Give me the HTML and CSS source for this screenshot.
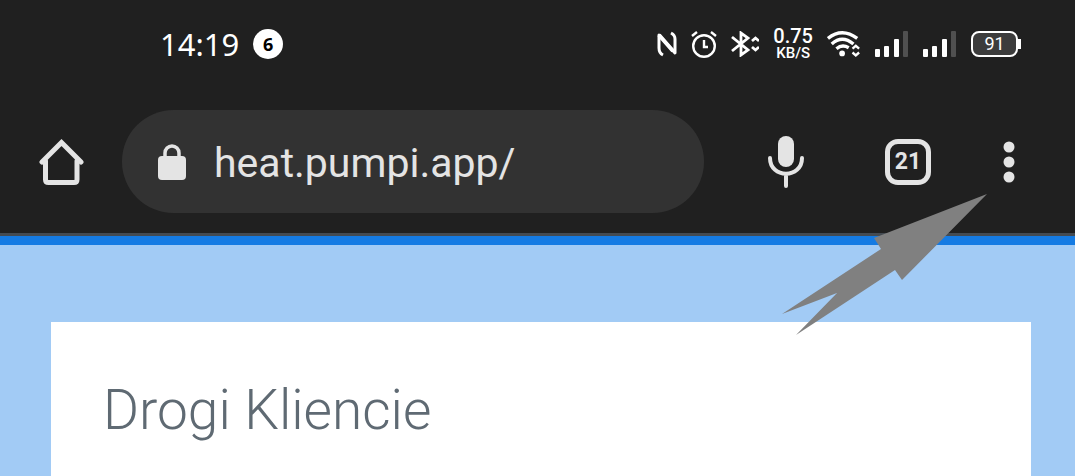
FILE: index.html
```html
<!DOCTYPE html>
<html lang="pl">
<head>
    <meta charset="UTF-8">
    <meta name="viewport" content="width=device-width, initial-scale=1.0">
    <title>heat.pumpi.app</title>
    <link rel="stylesheet" href="styles.css">
</head>
<body>
    <header class="browser">
        <div class="status-bar">
            <div class="status-left">
                <span class="clock">14:19</span>
                <span class="count">6</span>
            </div>
            <div class="status-right">
                <svg class="nfc" width="20" height="26" viewBox="0 0 20 26" fill="none" stroke="#fff" stroke-width="3" stroke-linejoin="round">
                    <path d="M6 24Q2 22 2 17V4L18 22V8Q18 4 14 2"/>
                    <path d="M2 4L16 20" stroke-width="4"/>
                </svg>
                <svg class="alarm" width="26" height="28" viewBox="0 0 26 28" fill="none" stroke="#fff" stroke-width="2.4">
                    <circle cx="13" cy="16" r="10.8"/>
                    <path d="M1 6L6 2M25 6L20 2M13 10V17H17"/>
                </svg>
                <svg class="bluetooth" width="28" height="26" viewBox="0 0 28 26" fill="none" stroke="#fff" stroke-width="2.8">
                    <path d="M1 6L17 19L10 24V2L17 7L1 20"/>
                    <path d="M21 10L24.500 7L28 10M21 16L24.500 19L28 16"/>
                </svg>
                <div class="speed">
                    <span class="speed-value">0.75</span>
                    <span class="speed-unit">KB/S</span>
                </div>
                <svg class="wifi" width="34" height="28" viewBox="0 0 36 28" fill="none" stroke="#fff" stroke-width="3.600">
                    <path d="M1 8Q16 -4 32 8M5 14Q16 4 28 14M10 19Q16 14 23 18"/>
                    <circle cx="16" cy="24" r="3" fill="#fff" stroke="none"/>
                    <path d="M27 19L30.500 16L34 19M27 23L30.500 26L34 23" stroke-width="2.500"/>
                </svg>
                <svg class="signal" width="34" height="26" viewBox="0 0 34 26" fill="#fff">
                    <rect x="0" y="18" width="5" height="8" rx="1"/>
                    <rect x="9" y="15" width="5" height="11" rx="1"/>
                    <rect x="19" y="8" width="5" height="18" rx="1"/>
                    <rect x="28" y="0" width="5" height="26" rx="1" fill="#505050"/>
                </svg>
                <svg class="signal" width="34" height="26" viewBox="0 0 34 26" fill="#fff">
                    <rect x="0" y="18" width="5" height="8" rx="1"/>
                    <rect x="9" y="15" width="5" height="11" rx="1"/>
                    <rect x="19" y="8" width="5" height="18" rx="1"/>
                    <rect x="28" y="0" width="5" height="26" rx="1" fill="#505050"/>
                </svg>
                <div class="battery">
                    <span class="battery-level">91</span>
                    <span class="battery-tip"></span>
                </div>
            </div>
        </div>

        <div class="toolbar">
            <button type="button" class="icon-btn" aria-label="Home">
                <svg width="46" height="48" viewBox="0 0 46 48" fill="none" stroke="#e4e4e4" stroke-width="5" stroke-linejoin="round" stroke-linecap="round">
                    <path d="M3 24L22.500 4.500L42 24" stroke-linejoin="miter"/>
                    <path d="M6.500 23V41.500Q6.500 44.500 9.500 44.500H35Q38 44.500 38 41.500V23"/>
                </svg>
            </button>
            <form class="address">
                <svg class="lock" width="28" height="36" viewBox="0 0 28 36">
                    <path d="M7 13V9A7 7 0 0 1 21 9V13" fill="none" stroke="#e4e4e4" stroke-width="3.500"/>
                    <rect x="0" y="12" width="28" height="24" rx="4" fill="#e4e4e4"/>
                </svg>
                <input type="text" class="url" aria-label="Address" value="heat.pumpi.app/">
            </form>
            <button type="button" class="icon-btn mic" aria-label="Voice search">
                <svg width="36" height="52" viewBox="0 0 36 52">
                    <rect x="10" y="0" width="16" height="31" rx="8" fill="#e4e4e4"/>
                    <path d="M2 22C2 43 34 43 34 22M18 38V50" fill="none" stroke="#e4e4e4" stroke-width="4" stroke-linecap="round"/>
                </svg>
            </button>
            <button type="button" class="icon-btn tabs">21</button>
            <div class="menu">
                <button type="button" class="icon-btn" aria-label="Menu">
                    <svg width="12" height="42" viewBox="0 0 12 42" fill="#e4e4e4">
                        <circle cx="6" cy="6" r="5.500"/>
                        <circle cx="6" cy="21" r="5.500"/>
                        <circle cx="6" cy="36" r="5.500"/>
                    </svg>
                </button>
                <svg class="pointer" width="206" height="142" viewBox="0 0 206 142" fill="#808080">
                    <path d="M205 0L92 44L99 55L0 120L55 99L14 141L113 76L120 86Z"/>
                </svg>
            </div>
        </div>
    </header>

    <main class="page">
        <section class="card">
            <h1>Drogi Kliencie</h1>
        </section>
    </main>
</body>
</html>
```

FILE: styles.css
```css
* {
    box-sizing: border-box;
}

body {
    margin: 0;
    min-height: 100vh;
    display: flex;
    flex-direction: column;
    font-family: Roboto, sans-serif;
    background-color: #a2cbf5;
}

svg {
    display: block;
    flex-shrink: 0;
}

.browser {
    background-color: #202020;
    border-bottom: 3px solid #444b52;
}

.status-bar {
    display: flex;
    justify-content: space-between;
    align-items: center;
    height: 88px;
    padding: 0 54px 0 160px;
    color: #fff;
}

.status-left,
.status-right {
    display: flex;
    align-items: center;
}

.status-left {
    gap: 14px;
}

.clock {
    font-family: "Noto Sans", sans-serif;
    font-size: 31px;
    line-height: 32px;
}

.count {
    width: 30px;
    height: 30px;
    border-radius: 50%;
    background-color: #fff;
    color: #000;
    font-family: "Noto Sans", sans-serif;
    font-size: 18px;
    font-weight: bold;
    line-height: 30px;
    text-align: center;
}

.status-right {
    gap: 14px;
}

.speed {
    display: flex;
    flex-direction: column;
    align-items: center;
    font-weight: 500;
}

.speed-value {
    font-size: 20px;
    line-height: 18px;
}

.speed-unit {
    font-size: 15px;
    line-height: 16px;
}

.battery {
    display: flex;
    align-items: center;
}

.battery-level {
    width: 47px;
    height: 26px;
    border: 2px solid #fff;
    border-radius: 8px;
    background-color: #3c3c3c;
    font-size: 18px;
    line-height: 22px;
    text-align: center;
}

.battery-tip {
    width: 3px;
    height: 10px;
    background-color: #fff;
}

.toolbar {
    display: flex;
    align-items: center;
    padding: 22px 43px 20px 39px;
}

.icon-btn {
    display: flex;
    justify-content: center;
    align-items: center;
    width: 46px;
    height: 52px;
    padding: 0;
    border: none;
    background: none;
    cursor: pointer;
}

.address {
    flex: 1;
    display: flex;
    align-items: center;
    gap: 28px;
    min-width: 0;
    height: 103px;
    margin: 0 59px 0 37px;
    padding: 0 36px;
    border-radius: 52px;
    background-color: #323232;
}

.url {
    flex: 1;
    min-width: 0;
    padding: 2px 0 0;
    border: none;
    outline: none;
    background: none;
    color: #e4e4e4;
    font-family: Roboto, sans-serif;
    font-size: 41px;
    line-height: 52px;
}

.mic {
    margin-right: 76px;
}

.tabs {
    height: 46px;
    margin-right: 55px;
    border: 5px solid #e4e4e4;
    border-radius: 13px;
    color: #e4e4e4;
    font-family: Roboto, sans-serif;
    font-size: 23px;
    font-weight: bold;
}

.menu {
    position: relative;
}

/* Arrow pointing at the menu button */
.pointer {
    position: absolute;
    top: 58px;
    right: 44px;
    pointer-events: none;
}

.page {
    flex: 1;
    display: flex;
    padding: 77px 44px 0 51px;
    border-top: 9px solid #157be3;
}

.card {
    flex: 1;
    padding: 56px 52px 24px;
    background-color: #fff;
}

h1 {
    margin: 0;
    color: #5f6a73;
    font-size: 55px;
    font-weight: 300;
    line-height: 64px;
}
```
